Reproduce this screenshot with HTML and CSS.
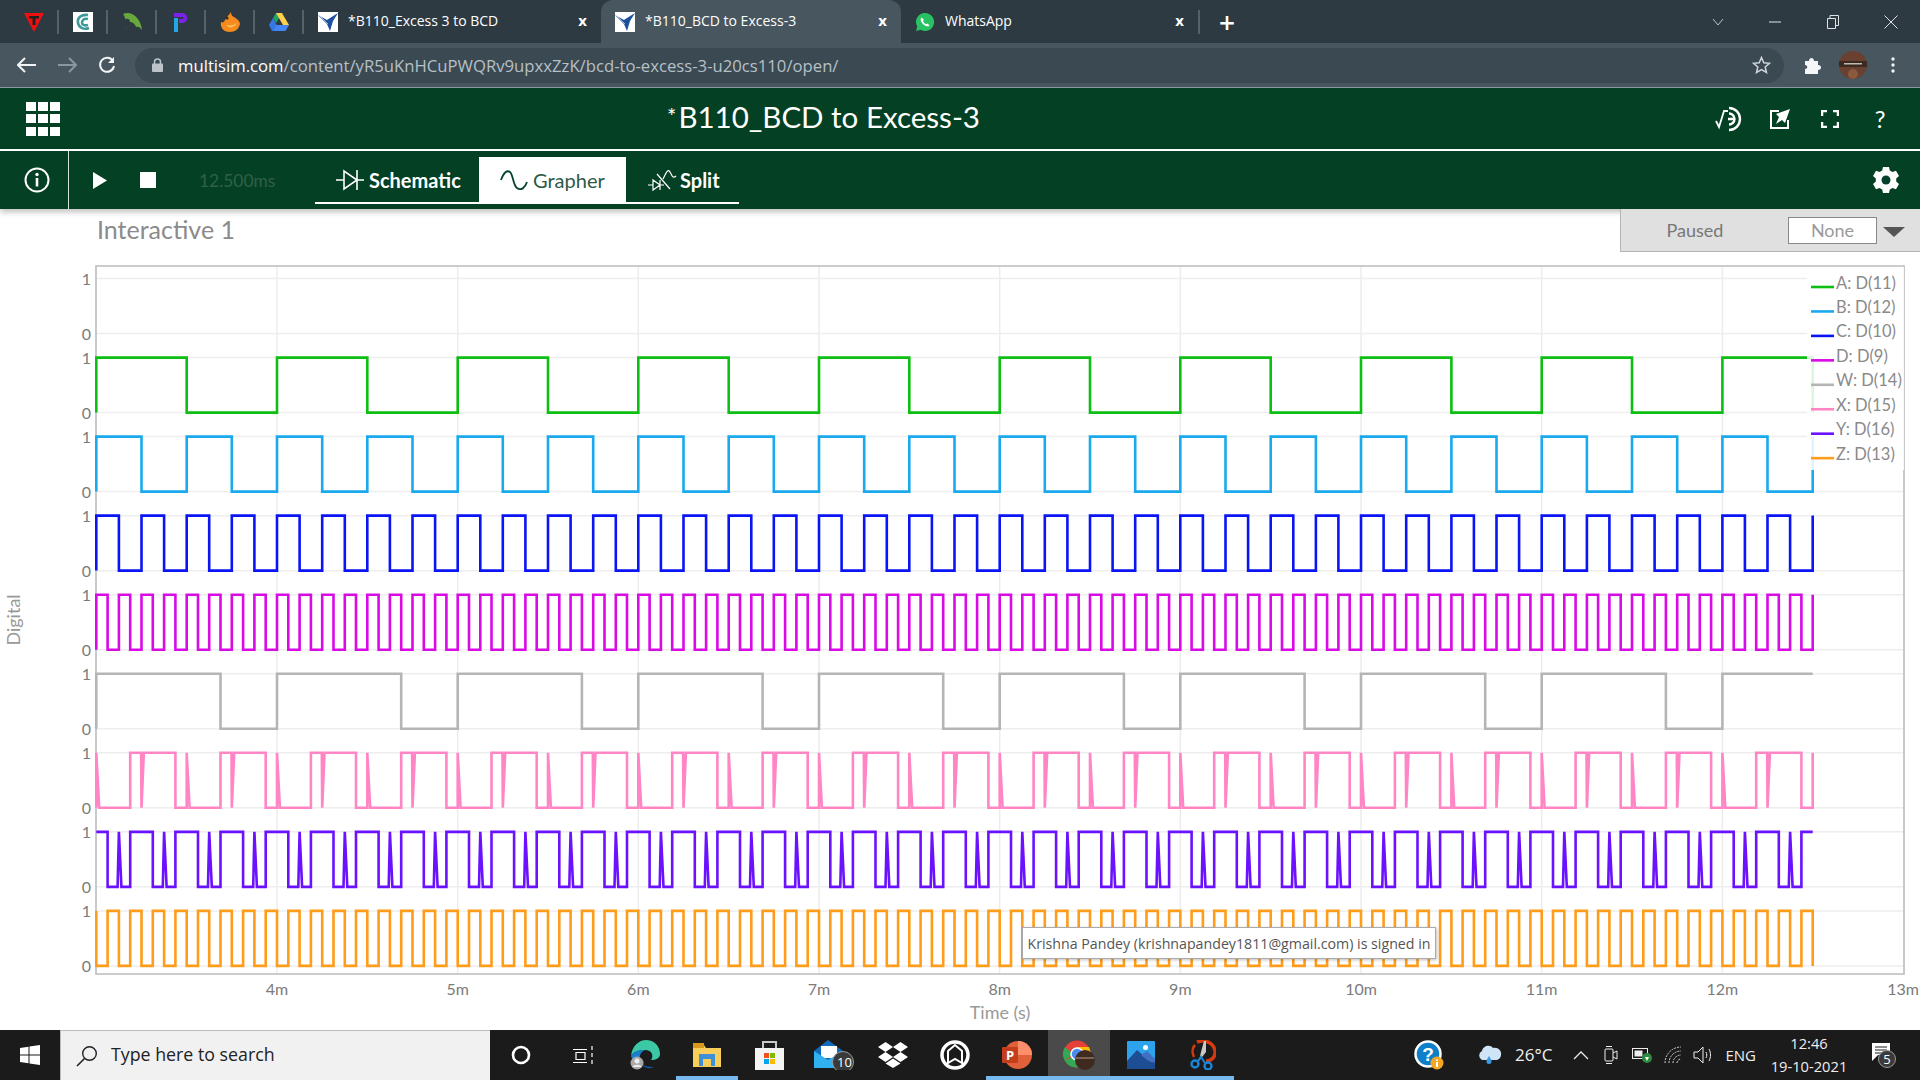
FILE: index.html
```html
<!DOCTYPE html>
<html lang="en">
<head>
    <meta charset="UTF-8">
    <title>*B110_BCD to Excess-3</title>
    <link rel="stylesheet" href="styles.css">
</head>
<body>
    <div class="tabstrip">
        <div class="pin"><svg width="20" height="20" viewBox="0 0 20 20"><path d="M0 1H20L10 20Z" fill="#f01010"/><path d="M5 4H15V6.5H11.5V13H8.5V6.5H5Z" fill="#222"/></svg></div>
        <div class="sep"></div>
        <div class="pin"><svg width="20" height="20" viewBox="0 0 20 20"><rect width="20" height="20" fill="#fff"/><path d="M15 3C8 2 4 6 5 11C6 16 11 18 16 16M15 7C11 6 9 8 9 11C9 13 12 14 15 13" fill="none" stroke="#3d9a98" stroke-width="2.6"/></svg></div>
        <div class="sep"></div>
        <div class="pin"><svg width="20" height="20" viewBox="0 0 20 20"><path d="M1 2C9 -2 19 6 20 18C18 15 16 14 14 15C13 12 11 10 8 10C8 7 6 6 3 7C3 5 2 3 1 2Z" fill="#69a83c"/><path d="M10 11L3 18L1 16" fill="none" stroke="#38423c" stroke-width="1"/></svg></div>
        <div class="sep"></div>
        <div class="pin"><svg width="14" height="20" viewBox="0 0 14 20"><path d="M0 1H8C15 1 15 11 8 11H5V7H8C10 7 10 5 8 5H0Z" fill="#7a22e8"/><path d="M0 6H4V20H0Z" fill="#1ea8ea"/></svg></div>
        <div class="sep"></div>
        <div class="pin"><svg width="20" height="20" viewBox="0 0 20 20"><path d="M10 20C3 20 0 15 1 10C3 11 4 10 5 8C7 4 9 3 11 0C11 3 12 4 14 5C18 7 20 10 20 12C19 17 15 20 10 20Z" fill="#f58a1f"/><circle cx="7" cy="6" r="1.6" fill="#3a2a18"/><path d="M6 13C9 17 14 16 17 11C14 13 10 14 6 13Z" fill="#fcc25c"/></svg></div>
        <div class="sep"></div>
        <div class="pin"><svg width="20" height="18" viewBox="0 0 20 18"><path d="M7 0H13L7 10L4 5Z" fill="#1fa463"/><path d="M13 0L20 12H14L7 0Z" fill="#ffd04b"/><path d="M0 12L4 5L7.5 12L4 18H3Z" fill="#3777e3"/><path d="M4 18L7 12H20L16.500 18Z" fill="#4285f4"/></svg></div>
        <div class="sep"></div>

        <div class="tab">
            <svg class="favicon" width="20" height="20" viewBox="0 0 20 20"><rect width="20" height="20" fill="#fff"/><path d="M0 3L9 8L12 6L20 1L15 9L12 19L9 12Z" fill="#1c4f9c"/><path d="M2 4L10 12" stroke="#fff" stroke-width="0.600"/></svg>
            <span class="tab-title">*B110_Excess 3 to BCD</span>
            <span class="tab-close">x</span>
        </div>
        <div class="tab active">
            <svg class="favicon" width="20" height="20" viewBox="0 0 20 20"><rect width="20" height="20" fill="#fff"/><path d="M0 3L9 8L12 6L20 1L15 9L12 19L9 12Z" fill="#1c4f9c"/><path d="M2 4L10 12" stroke="#fff" stroke-width="0.600"/></svg>
            <span class="tab-title">*B110_BCD to Excess-3</span>
            <span class="tab-close">x</span>
        </div>
        <div class="tab">
            <svg class="favicon" width="20" height="20" viewBox="0 0 20 20"><path d="M10 1A9 9 0 0 0 2.300 14.600L1 19L5.600 17.800A9 9 0 1 0 10 1Z" fill="#29c263"/><path d="M6.500 5.500C5 7 5.500 9.500 8 12C10.500 14.500 13 15 14.500 13.500L12.500 11.500L11 12.300C10 11.800 8.500 10.300 8 9L8.800 7.500Z" fill="#fff"/></svg>
            <span class="tab-title">WhatsApp</span>
            <span class="tab-close">x</span>
        </div>
        <div class="sep"></div>
        <span class="new-tab">+</span>

        <div class="win-controls">
            <svg class="win-btn" width="12" height="8" viewBox="0 0 12 8"><path d="M1 1L6 7L11 1" fill="none" stroke="#b8c0c6"/></svg>
            <svg class="win-btn" width="12" height="2" viewBox="0 0 12 2"><rect y="0.500" width="12" height="1" fill="#dfe3e6"/></svg>
            <svg class="win-btn" width="12" height="14" viewBox="0 0 12 14"><path d="M0.500 3.500H8.500V13.500H0.500ZM3 3.500V0.500H11.500V10.500H8.500" fill="none" stroke="#dfe3e6"/></svg>
            <svg class="win-btn" width="14" height="14" viewBox="0 0 14 14"><path d="M0.500 0.500L13.500 13.500M13.500 0.500L0.500 13.500" stroke="#dfe3e6"/></svg>
        </div>
    </div>

    <div class="navbar">
        <svg class="nav-icon" width="20" height="16" viewBox="0 0 20 16"><path d="M8 1L1 8L8 15M1 8H19" fill="none" stroke="#f2f4f5" stroke-width="2"/></svg>
        <svg class="nav-icon" width="20" height="16" viewBox="0 0 20 16"><path d="M12 1L19 8L12 15M19 8H1" fill="none" stroke="#8b979f" stroke-width="2"/></svg>
        <svg class="nav-icon" width="20" height="18" viewBox="0 0 20 18"><path d="M16 5A7 7 0 1 0 17 10" fill="none" stroke="#f2f4f5" stroke-width="2"/><path d="M17 1V7H11Z" fill="#f2f4f5"/></svg>
        <div class="urlbar">
            <svg class="lock" width="11" height="14" viewBox="0 0 11 14"><path d="M2.500 6V4A3 3 0 0 1 8.500 4V6" fill="none" stroke="#bcc4ca" stroke-width="1.500"/><rect y="5.500" width="11" height="8.500" rx="1" fill="#bcc4ca"/></svg>
            <span class="url"><b>multisim.com</b>/content/yR5uKnHCuPWQRv9upxxZzK/bcd-to-excess-3-u20cs110/open/</span>
            <svg class="star" width="19" height="18" viewBox="0 0 19 18"><path d="M9.500 1.500L11.800 6.800L17.500 7.300L13.200 11L14.500 16.500L9.500 13.600L4.500 16.500L5.800 11L1.500 7.300L7.200 6.800Z" fill="none" stroke="#cfd5d9" stroke-width="1.500"/></svg>
        </div>
        <svg class="ext" width="19" height="19" viewBox="0 0 19 19"><path d="M2 5H6C6 1 11 1 11 5H15V9C19 9 19 14 15 14V18H2V13C5 13 5 9 2 9Z" fill="#f4f6f7"/></svg>
        <svg class="avatar" width="28" height="28" viewBox="0 0 28 28"><circle cx="14" cy="14" r="14" fill="#6a4030"/><rect x="0" y="10" width="28" height="6" fill="#3b2a22"/><rect x="5" y="12" width="18" height="1.500" fill="#c4b8a8"/><circle cx="14" cy="23" r="5" fill="#8a5a3e"/></svg>
        <svg class="menu-dots" width="4" height="16" viewBox="0 0 4 16"><circle cx="2" cy="2" r="1.700" fill="#f0f2f3"/><circle cx="2" cy="8" r="1.700" fill="#f0f2f3"/><circle cx="2" cy="14" r="1.700" fill="#f0f2f3"/></svg>
    </div>

    <header class="app-header">
        <div class="app-grid">
            <i></i><i></i><i></i><i></i><i></i><i></i><i></i><i></i><i></i>
        </div>
        <h1 class="app-title"><span class="dirty">*</span>B110_BCD to Excess-3</h1>
        <div class="app-actions">
            <span class="action"><svg width="30" height="26" viewBox="0 0 30 26"><path d="M1 15L4 21L9 5H13" fill="none" stroke="#fff" stroke-width="1.800"/><path d="M14 2A11 11 0 0 1 14 24M14 7.500A5.500 5.500 0 0 1 14 18.500M13 13H19" fill="none" stroke="#fff" stroke-width="2.400"/></svg></span>
            <span class="action"><svg width="20" height="20" viewBox="0 0 20 20"><path d="M9 2H1V19H18V11" fill="none" stroke="#fff" stroke-width="2"/><path d="M6 15L9 8L6 5L20 0L15 14L12 11Z" fill="#fff"/></svg></span>
            <span class="action"><svg width="18" height="18" viewBox="0 0 18 18"><path d="M1 6V1H6M12 1H17V6M17 12V17H12M6 17H1V12" fill="none" stroke="#fff" stroke-width="2.500"/></svg></span>
            <span class="action help">?</span>
        </div>
    </header>

    <div class="toolbar">
        <div class="info-btn"><svg width="26" height="26" viewBox="0 0 26 26"><circle cx="13" cy="13" r="11.500" fill="none" stroke="#fff" stroke-width="2"/><rect x="11.700" y="11" width="2.600" height="8.500" fill="#fff"/><circle cx="13" cy="7.500" r="1.700" fill="#fff"/></svg></div>
        <div class="run-btn"><svg width="14" height="17" viewBox="0 0 14 17"><path d="M0 0L14 8.500L0 17Z" fill="#fff"/></svg></div>
        <div class="run-btn"><svg width="16" height="16" viewBox="0 0 16 16"><rect width="16" height="16" fill="#fff"/></svg></div>
        <div class="sim-time">12.500ms</div>
        <nav class="view-tabs">
            <a class="view-tab schematic">
                <svg width="28" height="22" viewBox="0 0 28 22"><path d="M0 11H8M8 2V20L21 11ZM21 1V21M21 11H28" fill="none" stroke="#fff" stroke-width="1.600"/></svg>
                <span>Schematic</span>
            </a>
            <a class="view-tab current">
                <svg width="28" height="22" viewBox="0 0 28 22"><path d="M1 11C4 3 7 1 10 3C13 5 13 16 17 19C21 22 25 19 27 13" fill="none" stroke="#04432a" stroke-width="1.800"/></svg>
                <span>Grapher</span>
            </a>
            <a class="view-tab split">
                <svg width="29" height="24" viewBox="0 0 29 24"><path d="M0 17H5M5 12V22L12 17ZM12 12V22M12 17H16M9 6L22 21M15 11C18 5 20 0 22 4C24 8 25 11 28 8" fill="none" stroke="#fff" stroke-width="1.200"/></svg>
                <span>Split</span>
            </a>
        </nav>
        <svg class="gear" width="26" height="26" viewBox="0 0 26 26"><path d="M10 0H16L16.800 3.600L19.400 5L23 3.800L26 9L23.200 11.500V14.500L26 17L23 22.200L19.400 21L16.800 22.400L16 26H10L9.200 22.400L6.600 21L3 22.200L0 17L2.800 14.500V11.500L0 9L3 3.800L6.600 5L9.200 3.600Z" fill="#fff"/><circle cx="13" cy="13" r="4.500" fill="#04402a"/></svg>
    </div>

    <main class="grapher">
        <div class="graph-head">
            <h2 class="graph-name">Interactive 1</h2>
            <div class="run-state">
                <span class="state-text">Paused</span>
                <span class="cursor-select">None</span>
                <span class="select-arrow"></span>
            </div>
        </div>
        <svg id="chart" class="chart" viewBox="0 252 1920 778" width="1920" height="778"></svg>
        <div class="signin-tip">Krishna Pandey (krishnapandey1811@gmail.com) is signed in</div>
    </main>

    <footer class="taskbar">
        <div class="start"><svg width="20" height="20" viewBox="0 0 20 20"><path d="M0 3L8.500 1.800V9.500H0ZM9.500 1.600L20 0V9.500H9.500ZM0 10.500H8.500V18.200L0 17ZM9.500 10.500H20V20L9.500 18.400Z" fill="#fff"/></svg></div>
        <div class="search">
            <svg width="22" height="22" viewBox="0 0 22 22"><circle cx="13.500" cy="8.500" r="6.800" fill="none" stroke="#222" stroke-width="1.400"/><path d="M8.500 13.500L1 21" stroke="#222" stroke-width="1.600"/></svg>
            <span class="search-text">Type here to search</span>
        </div>
        <div class="task-btn"><svg width="20" height="20" viewBox="0 0 20 20"><circle cx="10" cy="10" r="8" fill="none" stroke="#fff" stroke-width="2.600"/></svg></div>
        <div class="task-btn"><svg width="22" height="20" viewBox="0 0 22 20"><path d="M1 4.500H15M1 17.500H15M4 7.500H13V14.500H4ZM20 1V5M20 8V12M20 15V19" fill="none" stroke="#fff" stroke-width="1.200"/></svg></div>
        <div class="task-btn"><svg width="30" height="30" viewBox="0 0 30 30"><path d="M1 16C2 6 9 0 16 0C24 0 30 6 30 14C30 18 26 20 21 20C24 16 22 10 15 10C9 10 3 12 1 16Z" fill="#3cc8a4"/><path d="M1 16C3 12 9 10 15 10C10 12 9 17 10 21C6 22 2 20 1 16Z" fill="#1a7fd0"/><path d="M10 21C12 27 18 30 24 27C18 27 12 26 10 21Z" fill="#0d5aa8"/><circle cx="7" cy="23" r="6.500" fill="#a9a9a9"/><circle cx="7" cy="21" r="2.500" fill="#eee"/><path d="M2.500 27C3 24 11 24 11.500 27Z" fill="#eee"/></svg></div>
        <div class="task-btn underlined"><svg width="28" height="24" viewBox="0 0 28 24"><path d="M0 2H11L13 5H28V24H0Z" fill="#f7ce5a"/><rect y="0" width="11" height="5" fill="#d99a1c"/><path d="M6 23V11H22V23H18V16H10V23Z" fill="#3d8fd8"/></svg></div>
        <div class="task-btn"><svg width="29" height="30" viewBox="0 0 29 30"><path d="M8 8V2H21V8" fill="none" stroke="#c9c9c9" stroke-width="2"/><rect y="8" width="29" height="22" fill="#f4f4f4"/><rect x="9" y="13" width="5" height="5" fill="#f25022"/><rect x="15" y="13" width="5" height="5" fill="#7fba00"/><rect x="9" y="19" width="5" height="5" fill="#00a4ef"/><rect x="15" y="19" width="5" height="5" fill="#ffb900"/></svg></div>
        <div class="task-btn"><span class="mail-wrap"><svg width="42" height="30" viewBox="0 0 42 30"><path d="M1 11L15 0L30 11V28H1Z" fill="#0f6cbd"/><path d="M8 6H24V18H8Z" fill="#fff"/><path d="M1 11L15 20L30 11V28H1Z" fill="#32b1f0"/><circle cx="30" cy="22" r="10.500" fill="#3a3a3a" stroke="#999"/></svg><span class="mail-count">10</span></span></div>
        <div class="task-btn"><svg width="30" height="26" viewBox="0 0 30 26"><path d="M7.500 0L15 5L7.500 10L0 5ZM22.500 0L30 5L22.500 10L15 5ZM7.500 10L15 15L7.500 20L0 15ZM22.500 10L30 15L22.500 20L15 15ZM15 16.500L22.500 21.500L15 26L7.500 21.500Z" fill="#fff"/></svg></div>
        <div class="task-btn"><svg width="30" height="30" viewBox="0 0 30 30"><circle cx="15" cy="15" r="13" fill="none" stroke="#fff" stroke-width="3.500"/><path d="M8 11L15 5L22 11V23L15 19L8 23Z" fill="none" stroke="#fff" stroke-width="2"/></svg></div>
        <div class="task-btn underlined"><svg width="30" height="28" viewBox="0 0 30 28"><circle cx="16" cy="14" r="14" fill="#e0603a"/><path d="M16 0A14 14 0 0 1 30 14H16Z" fill="#ff8f6b"/><rect y="6" width="16" height="16" rx="1" fill="#c43e1c"/><text x="8" y="19" class="ppt-letter">P</text></svg></div>
        <div class="task-btn underlined active-app"><svg width="32" height="30" viewBox="0 0 32 30"><circle cx="14" cy="14" r="13.500" fill="#e5413a"/><path d="M14 14L2 21A13.500 13.500 0 0 0 14 27.500Z" fill="#34a853"/><path d="M2 7A13.500 13.500 0 0 0 2 21L10 14Z" fill="#34a853"/><path d="M14 7H26A13.500 13.500 0 0 1 24 22L14 14Z" fill="#fbbc05"/><circle cx="14" cy="14" r="6" fill="#4c8bf5" stroke="#fff" stroke-width="1.500"/><circle cx="22" cy="20" r="10" fill="#3f2a20"/><rect x="13" y="17" width="18" height="2" fill="#7a6350"/></svg></div>
        <div class="task-btn underlined"><svg width="28" height="28" viewBox="0 0 28 28"><rect width="28" height="28" rx="1" fill="#2ca3ea"/><circle cx="18.500" cy="6.500" r="2.500" fill="#fff"/><path d="M0 20L10 9L24 21L28 18V28H0Z" fill="#1d4e93"/><path d="M14 14L20 10L28 18V22L20 19Z" fill="#4170c2"/></svg></div>
        <div class="task-btn underlined"><svg width="26" height="30" viewBox="0 0 26 30"><path d="M7 2C15 -1 24 3 25 11C26 17 21 21 16 21" fill="none" stroke="#d33a0f" stroke-width="3.500"/><path d="M5 5C2 8 2 13 4 17" fill="none" stroke="#d33a0f" stroke-width="2.500"/><path d="M14 1L16 1L16 12L9 21L11 12Z" fill="#c9c9c9"/><circle cx="5" cy="24" r="3.500" fill="none" stroke="#1a86d8" stroke-width="2.400"/><circle cx="18" cy="26" r="3.500" fill="none" stroke="#1a86d8" stroke-width="2.400"/><path d="M8 21L11 17L15 23" fill="none" stroke="#1a86d8" stroke-width="2"/></svg></div>

        <div class="tray">
            <svg class="tray-help" width="30" height="30" viewBox="0 0 30 30"><circle cx="14" cy="14" r="12.500" fill="#0f7fc9" stroke="#fff" stroke-width="2.500"/><text x="14" y="21" class="help-mark">?</text><circle cx="23" cy="23" r="6.500" fill="#f5a623"/><rect x="22" y="22" width="2" height="5" fill="#fff"/><rect x="22" y="19.500" width="2" height="1.500" fill="#fff"/></svg>
            <svg class="tray-cloud" width="26" height="22" viewBox="0 0 26 22"><path d="M6 16A5 5 0 0 1 6 7C7 2 14 0 17 4C22 3 26 7 25 11C25 14 22 16 20 16Z" fill="#cfe5f7"/><path d="M13 12C15 15 15.500 16 15.500 17.500A2.500 2.500 0 0 1 10.500 17.500C10.500 16 11 15 13 12Z" fill="#3f9be0"/></svg>
            <span class="tray-temp">26°C</span>
            <svg class="tray-chevron" width="16" height="9" viewBox="0 0 16 9"><path d="M1 8L8 1L15 8" fill="none" stroke="#e8e8e8" stroke-width="1.300"/></svg>
            <svg class="tray-meet" width="14" height="20" viewBox="0 0 14 20"><rect x="1" y="4" width="8" height="12" rx="1" fill="none" stroke="#eee"/><path d="M9 8L13 6V14L9 12M2 1.500H8M2 18.500H8" fill="none" stroke="#eee"/></svg>
            <svg class="tray-plug" width="20" height="18" viewBox="0 0 20 18"><rect x="0.500" y="2.500" width="15" height="10" fill="none" stroke="#eee"/><rect x="2.500" y="4.500" width="8" height="6" fill="#eee"/><circle cx="15" cy="12" r="5" fill="#2d8a3e"/><path d="M13.500 9V11M16.500 9V11M13 11H17L15 15Z" fill="#fff"/></svg>
            <svg class="tray-wifi" width="18" height="18" viewBox="0 0 18 18"><path d="M1 17A16 16 0 0 1 17 1M5 17A12 12 0 0 1 17 5M9 17A8 8 0 0 1 17 9M13 17A4 4 0 0 1 17 13" fill="none" stroke="#cfcfcf" stroke-dasharray="2 1"/></svg>
            <svg class="tray-vol" width="20" height="18" viewBox="0 0 20 18"><path d="M1 6H5L10 1V17L5 12H1Z" fill="none" stroke="#eee"/><path d="M13 6C14 8 14 10 13 12M16 3C18 7 18 11 16 15" fill="none" stroke="#eee"/></svg>
            <span class="tray-lang">ENG</span>
            <div class="tray-clock"><span>12:46</span><span>19-10-2021</span></div>
            <span class="tray-note"><svg width="26" height="26" viewBox="0 0 26 26"><path d="M2 1H20V13H8L2 19Z" fill="#fff"/><path d="M5 5H17M5 8H17M5 11H12" stroke="#1b1b1b"/><circle cx="17" cy="17" r="8.500" fill="#3a3a3a" stroke="#999"/></svg><span class="note-count">5</span></span>
        </div>
    </footer>

    <script src="script.js"></script>
</body>
</html>
```

FILE: styles.css
```css
* {
    box-sizing: border-box;
}

body {
    margin: 0;
    width: 1920px;
    height: 1080px;
    overflow: hidden;
    position: relative;
    font-family: Lato, Arial, sans-serif;
    background-color: #fff;
}

/* browser chrome */
.tabstrip {
    height: 43px;
    padding-left: 10px;
    display: flex;
    align-items: center;
    background-color: #2e3a42;
    color: #fff;
    font-family: "Open Sans", Arial, sans-serif;
}

.pin {
    width: 47px;
    display: flex;
    justify-content: center;
}

.sep {
    width: 2px;
    height: 24px;
    background-color: #55626b;
}

.tab {
    width: 297px;
    height: 43px;
    padding: 0 14px;
    display: flex;
    align-items: center;
}

.tab.active {
    background-color: #47565f;
    border-radius: 12px 12px 0 0;
    width: 300px;
}

.favicon {
    flex-shrink: 0;
    margin-right: 10px;
}

.tab-title {
    flex: 1;
    margin-top: -3px;
    font-size: 14px;
}

.tab-close {
    margin-top: -3px;
    font-size: 15px;
    font-weight: 700;
}

.new-tab {
    margin-left: 19px;
    font-size: 28px;
    line-height: 26px;
    font-weight: 600;
}

.win-controls {
    margin-left: auto;
    width: 208px;
    padding-right: 22px;
    display: flex;
    justify-content: space-between;
    align-items: center;
}

.navbar {
    height: 45px;
    padding-top: 4px;
    padding-bottom: 4px;
    display: flex;
    align-items: center;
    background-color: #47565f;
    border-bottom: 1px solid #8d999f;
}

.nav-icon {
    margin-left: 17px;
    flex-shrink: 0;
}

.nav-icon + .nav-icon {
    margin-left: 20px;
}

.urlbar {
    margin-left: 18px;
    width: 1649px;
    height: 35px;
    padding: 0 13px 0 17px;
    display: flex;
    align-items: center;
    border-radius: 18px;
    background-color: #3b4953;
}

.lock {
    margin-right: 15px;
}

.url {
    flex: 1;
    font-family: "Open Sans", Arial, sans-serif;
    font-size: 16.7px;
    color: #b6c0c6;
}

.url b {
    font-weight: 400;
    color: #fff;
}

.ext {
    margin-left: 19px;
}

.avatar {
    margin-left: 17px;
}

.menu-dots {
    margin-left: 24px;
}

/* app bars */
.app-header {
    height: 61px;
    display: flex;
    align-items: center;
    background-color: #044024;
    color: #fff;
}

.app-grid {
    margin-left: 26px;
    width: 34px;
    height: 34px;
    display: grid;
    grid-template-columns: repeat(3, 10px);
    grid-template-rows: repeat(3, 9px);
    column-gap: 2px;
    row-gap: 3.5px;
}

.app-grid i {
    background-color: #fff;
}

.app-title {
    flex: 1;
    margin: 0;
    padding-bottom: 5px;
    text-align: center;
    font-size: 29.5px;
    font-weight: 400;
    white-space: nowrap;
}

.dirty {
    font-size: 22px;
    vertical-align: 4px;
    margin-right: 2px;
}

.app-actions {
    width: 333px;
    padding-right: 15px;
    display: flex;
    justify-content: flex-end;
    align-items: center;
}

.action {
    width: 50px;
    display: flex;
    justify-content: center;
}

.help {
    font-size: 24px;
}

.toolbar {
    height: 60px;
    display: flex;
    align-items: stretch;
    background-color: #044024;
    border-top: 2px solid #fff;
    box-shadow: 0 3px 6px rgba(0, 0, 0, 0.25);
    position: relative;
}

.info-btn {
    width: 69px;
    padding-left: 5px;
    display: flex;
    align-items: center;
    justify-content: center;
    border-right: 1px solid #d8e0dc;
}

.run-btn {
    width: 48px;
    display: flex;
    align-items: center;
    justify-content: center;
}

.run-btn:nth-child(2) {
    margin-left: 7px;
}

.sim-time {
    width: 116px;
    margin-left: 27px;
    align-self: center;
    font-size: 17.4px;
    color: #2f6148;
}

.view-tabs {
    margin-top: 6px;
    height: 47px;
    display: flex;
    border-bottom: 2px solid #fff;
}

.view-tab {
    display: flex;
    align-items: center;
    gap: 5px;
    font-size: 20px;
    color: #fff;
    font-weight: 700;
}

.view-tab.schematic {
    width: 164px;
    padding-left: 21px;
}

.view-tab.current {
    width: 147px;
    padding-left: 21px;
    background-color: #fff;
    color: #2d5a45;
    font-weight: 400;
}

.view-tab.split {
    width: 113px;
    padding-left: 22px;
    gap: 3px;
}

.gear {
    margin-left: auto;
    margin-right: 21px;
    align-self: center;
}

/* grapher */
.grapher {
    position: relative;
}

.graph-head {
    height: 43px;
    display: flex;
    justify-content: space-between;
}

.graph-name {
    margin: 0 0 0 97px;
    padding-top: 5px;
    font-size: 25px;
    font-weight: 400;
    color: #8b8b8b;
}

.run-state {
    width: 300px;
    display: flex;
    align-items: center;
    background-color: #e0e0e0;
    border-left: 1px solid #b4b4b4;
    border-bottom: 1px solid #b4b4b4;
    color: #777;
    font-size: 18px;
}

.state-text {
    width: 148px;
    margin-right: 19px;
    text-align: center;
}

.cursor-select {
    width: 89px;
    height: 27px;
    background-color: #fff;
    border: 1px solid #888;
    text-align: center;
    line-height: 24px;
    color: #999;
}

.select-arrow {
    margin-left: 6px;
    margin-top: 4px;
    border-left: 11px solid transparent;
    border-right: 11px solid transparent;
    border-top: 10px solid #555;
}

.chart {
    display: block;
}

.chart text {
    font-family: Lato, Arial, sans-serif;
}

.tick-label {
    font-size: 16px;
    fill: #7b7b7b;
}

.legend-label {
    font-size: 16.5px;
    fill: #8a8a8a;
}

.axis-title {
    font-size: 18px;
    fill: #999;
}

.signin-tip {
    position: absolute;
    left: 1022px;
    top: 718px;
    width: 414px;
    height: 32px;
    background-color: #fff;
    border: 1px solid #aaa;
    box-shadow: 1px 1px 3px rgba(0, 0, 0, 0.25);
    font-family: "Open Sans", Arial, sans-serif;
    font-size: 14.2px;
    line-height: 31px;
    text-align: center;
    white-space: nowrap;
    color: #555;
}

/* windows taskbar */
.taskbar {
    height: 50px;
    display: flex;
    background-color: #1b1b1b;
    color: #eee;
    font-family: "Open Sans", Arial, sans-serif;
}

.start {
    width: 60px;
    display: flex;
    align-items: center;
    justify-content: center;
}

.search {
    width: 430px;
    padding-left: 15px;
    display: flex;
    align-items: center;
    gap: 13px;
    background-color: #f1f1f1;
    border-top: 1px solid #bbb;
    border-left: 1px solid #bbb;
    font-size: 17.8px;
    color: #222;
}

.search-text {
    margin-top: -3px;
}

.task-btn {
    width: 62px;
    display: flex;
    align-items: center;
    justify-content: center;
    border-bottom: 4px solid transparent;
    padding-top: 3px;
}

.task-btn.underlined {
    border-bottom-color: #76b9ed;
    background-clip: padding-box;
}

.active-app {
    background-color: #4a4a4a;
}

.mail-wrap {
    position: relative;
    margin-left: 6px;
    display: flex;
}

.mail-count {
    position: absolute;
    left: 24px;
    top: 14px;
    width: 12px;
    font-size: 13px;
    line-height: 16px;
    text-align: center;
    color: #fff;
}

.ppt-letter {
    font-family: "Open Sans", Arial, sans-serif;
    font-size: 13px;
    font-weight: 700;
    text-anchor: middle;
    fill: #fff;
}

.help-mark {
    font-family: "Liberation Sans", Arial, sans-serif;
    font-size: 19px;
    font-weight: 700;
    text-anchor: middle;
    fill: #fff;
}

.tray {
    display: flex;
    align-items: center;
    margin-left: 180px;
}

.tray-cloud {
    margin-left: 32px;
}

.tray-temp {
    margin-left: 13px;
    margin-top: -2px;
    font-size: 17px;
}

.tray-chevron {
    margin-left: 21px;
}

.tray-meet {
    margin-left: 15px;
}

.tray-plug {
    margin-left: 14px;
}

.tray-wifi {
    margin-left: 12px;
}

.tray-vol {
    margin-left: 11px;
}

.tray-lang {
    margin-left: 12px;
    font-size: 15px;
}

.tray-clock {
    margin-left: 7px;
    width: 92px;
    display: flex;
    flex-direction: column;
    align-items: center;
    gap: 6px;
    font-size: 14.7px;
    line-height: 17px;
}

.tray-note {
    position: relative;
    margin-left: 15px;
    display: flex;
}

.note-count {
    position: absolute;
    left: 8px;
    top: 8px;
    width: 18px;
    font-size: 13px;
    line-height: 18px;
    text-align: center;
    color: #fff;
}
```

FILE: script.js
```js
// digital traces for the grapher, drawn in page coordinates
const SVG_NS = 'http://www.w3.org/2000/svg';
const chart = document.getElementById('chart');

const PLOT = { left: 96, right: 1904, top: 266, bottom: 974 };
const STEP = 1 / 16; // one pattern step in ms
const END_STEPS = 152; // 3ms to 12.5ms

const xAt = t => 277 + (t - 4) * 180.67;
const highY = row => 278.5 + 79.05 * row;
const lowY = row => 333.5 + 79.05 * row;

const traces = [
    { name: 'A: D(11)', color: '#0cbf12', pattern: '1111111100000000', start: 0 },
    { name: 'B: D(12)', color: '#1aa9ec', pattern: '11110000', start: 0 },
    { name: 'C: D(10)', color: '#0a14f5', pattern: '1100', start: 0 },
    { name: 'D: D(9)', color: '#d80ae6', pattern: '10', start: 0 },
    { name: 'W: D(14)', color: '#b5b5b5', pattern: '1111111111100000', start: 0 },
    { name: 'X: D(15)', color: '#ff85c4', pattern: '00011110', spikes: { 0: [0, 0.016], 4: [0.002, 0.013] } },
    { name: 'Y: D(16)', color: '#6a12ff', pattern: '1001', spikes: { 2: [0.007, 0.014] } },
    { name: 'Z: D(13)', color: '#ff9c1a', pattern: '01', start: 1 }
];

function add(tag, attrs, text) {
    const el = document.createElementNS(SVG_NS, tag);
    for (const key in attrs) {
        el.setAttribute(key, attrs[key]);
    }
    if (text) {
        el.textContent = text;
    }
    chart.appendChild(el);
    return el;
}

function tracePoints(trace, row) {
    const pts = [];
    const push = (t, level) => pts.push(xAt(t).toFixed(1) + ',' + (level ? highY(row) : lowY(row)).toFixed(1));
    const size = trace.pattern.length;
    let level = trace.pattern[0] === '1' ? 1 : 0;

    if (trace.start !== undefined) {
        push(3, trace.start);
    }
    push(3, level);

    // the last step closes with its edge at 12.5ms
    for (let k = 0; k <= END_STEPS; k++) {
        const t = 3 + k * STEP;
        const next = trace.pattern[k % size] === '1' ? 1 : 0;
        if (next !== level) {
            push(t, level);
            push(t, next);
            level = next;
        }
        const spike = trace.spikes && trace.spikes[k % size];
        if (spike) {
            push(t - spike[0], level);
            push(t, 1 - level);
            if (k < END_STEPS) {
                push(t + spike[1], level);
            }
        }
    }
    if (!(trace.spikes && trace.spikes[END_STEPS % size])) {
        push(12.5, level);
    }
    return pts.join(' ');
}

// grid
for (let m = 4; m <= 12; m++) {
    add('line', { x1: xAt(m), x2: xAt(m), y1: PLOT.top, y2: PLOT.bottom, stroke: '#ececec', 'stroke-width': 1.5 });
}
for (let row = 0; row <= 8; row++) {
    [highY(row), lowY(row)].forEach(y => {
        add('line', { x1: PLOT.left, x2: PLOT.right, y1: y, y2: y, stroke: '#eeeeee', 'stroke-width': 1.5 });
    });
    add('text', { x: 91, y: highY(row) + 6, class: 'tick-label', 'text-anchor': 'end' }, '1');
    add('text', { x: 91, y: lowY(row) + 6, class: 'tick-label', 'text-anchor': 'end' }, '0');
}

// axis frame
add('path', {
    d: `M${PLOT.left} ${PLOT.top}H${PLOT.right}V${PLOT.bottom}H${PLOT.left}Z`,
    fill: 'none',
    stroke: '#bcbcbc',
    'stroke-width': 1.6
});

// signals
traces.forEach((trace, i) => {
    add('polyline', {
        points: tracePoints(trace, i + 1),
        fill: 'none',
        stroke: trace.color,
        'stroke-width': 2.6
    });
});

// x axis
for (let m = 4; m <= 13; m++) {
    add('text', { x: xAt(m), y: 995, class: 'tick-label', 'text-anchor': 'middle' }, m + 'm');
}
add('text', { x: 1000, y: 1019, class: 'axis-title', 'text-anchor': 'middle' }, 'Time (s)');
add('text', { transform: 'translate(20 620) rotate(-90)', class: 'axis-title', 'text-anchor': 'middle' }, 'Digital');

// legend sits over the traces
add('rect', { x: 1807, y: 267, width: 97, height: 203, fill: '#fff', opacity: 0.86 });
traces.forEach((trace, i) => {
    const y = 287 + i * 24.45;
    add('line', { x1: 1811, x2: 1834, y1: y, y2: y, stroke: trace.color, 'stroke-width': 2.6 });
    add('text', { x: 1836, y: y + 1.5, class: 'legend-label' }, trace.name);
});
```
